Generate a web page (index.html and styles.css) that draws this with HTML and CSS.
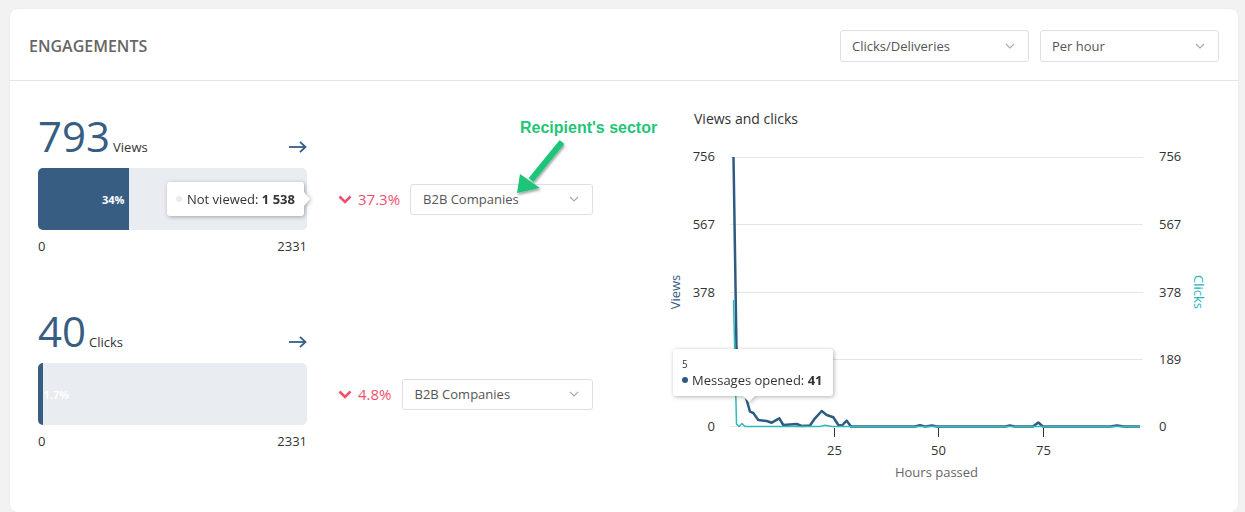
FILE: index.html
```html
<!DOCTYPE html>
<html lang="en">
<head>
<meta charset="utf-8">
<title>Engagements</title>
<link rel="stylesheet" href="styles.css">
</head>
<body>
<div class="card">
  <div class="card-header">
    <h2 class="title">ENGAGEMENTS</h2>
    <div class="header-controls">
      <div class="select select-metric"><span>Clicks/Deliveries</span><svg class="chev" width="10" height="6" viewBox="0 0 10 6"><polyline points="1,1 5,5 9,1"/></svg></div>
      <div class="select select-period"><span>Per hour</span><svg class="chev" width="10" height="6" viewBox="0 0 10 6"><polyline points="1,1 5,5 9,1"/></svg></div>
    </div>
  </div>

  <div class="card-body">
    <div class="metrics">
      <div class="metric">
        <div class="metric-head">
          <div class="metric-value"><span class="num">793</span><span class="unit">Views</span></div>
          <svg class="go" width="18" height="12" viewBox="0 0 18 12"><line x1="0" y1="6" x2="16.5" y2="6"/><polyline points="11,0.8 16.5,6 11,11.2"/></svg>
        </div>
        <div class="bar-row">
          <div class="bar">
            <div class="bar-fill" style="width:34%"><span class="bar-pct">34%</span></div>
            <div class="tip tip-bar"><span class="dot dot-light"></span>Not viewed:&nbsp;<b>1 538</b></div>
          </div>
          <div class="change">
            <div class="delta"><svg width="14" height="9" viewBox="0 0 14 9"><polyline points="1.5,1.5 7,7 12.5,1.5"/></svg>37.3%</div>
            <div class="select select-sector"><span>B2B Companies</span><svg class="chev" width="10" height="6" viewBox="0 0 10 6"><polyline points="1,1 5,5 9,1"/></svg></div>
          </div>
        </div>
        <div class="bar-scale"><span>0</span><span>2331</span></div>
      </div>

      <div class="metric">
        <div class="metric-head">
          <div class="metric-value"><span class="num">40</span><span class="unit">Clicks</span></div>
          <svg class="go" width="18" height="12" viewBox="0 0 18 12"><line x1="0" y1="6" x2="16.5" y2="6"/><polyline points="11,0.8 16.5,6 11,11.2"/></svg>
        </div>
        <div class="bar-row">
          <div class="bar">
            <div class="bar-fill" style="width:1.7%"></div>
            <span class="bar-pct bar-pct-out">1.7%</span>
          </div>
          <div class="change">
            <div class="delta"><svg width="14" height="9" viewBox="0 0 14 9"><polyline points="1.5,1.5 7,7 12.5,1.5"/></svg>4.8%</div>
            <div class="select select-sector"><span>B2B Companies</span><svg class="chev" width="10" height="6" viewBox="0 0 10 6"><polyline points="1,1 5,5 9,1"/></svg></div>
          </div>
        </div>
        <div class="bar-scale"><span>0</span><span>2331</span></div>
      </div>
    </div>

    <div class="chart-col">
      <div class="chart-title">Views and clicks</div>
      <div class="chart-wrap">
        <svg class="chart-svg" width="578" height="360" viewBox="0 0 578 360">
          <g class="grid">
            <line x1="70" y1="28.5" x2="483" y2="28.5"/>
            <line x1="70" y1="95.5" x2="483" y2="95.5"/>
            <line x1="70" y1="163.5" x2="483" y2="163.5"/>
            <line x1="70" y1="230.5" x2="483" y2="230.5"/>
            <line x1="70" y1="297.5" x2="483" y2="297.5"/>
          </g>
          <g class="ylab-left">
            <text x="55" y="32">756</text>
            <text x="55" y="100">567</text>
            <text x="55" y="168">378</text>
            <text x="55" y="235">189</text>
            <text x="55" y="302">0</text>
          </g>
          <g class="ylab-right">
            <text x="499" y="32">756</text>
            <text x="499" y="100">567</text>
            <text x="499" y="168">378</text>
            <text x="499" y="235">189</text>
            <text x="499" y="302">0</text>
          </g>
          <text class="axis-title-views" transform="translate(20 163) rotate(-90)">Views</text>
          <text class="axis-title-clicks" transform="translate(534 163) rotate(90)">Clicks</text>
          <g class="ticks">
            <line x1="174.5" y1="299" x2="174.5" y2="308"/>
            <line x1="278.5" y1="299" x2="278.5" y2="308"/>
            <line x1="383.5" y1="299" x2="383.5" y2="308"/>
          </g>
          <g class="xlab">
            <text x="174.5" y="326">25</text>
            <text x="278.5" y="326">50</text>
            <text x="383.5" y="326">75</text>
          </g>
          <text class="x-title" x="276.5" y="348">Hours passed</text>
          <path class="line-views" d="M73.5 28 L76.5 220 L80 246 L86.7 271 L90 282.7 L93.3 284 L98.3 291 L106.7 292 L111.7 293.7 L119.3 289.3 L123.3 296 L136.7 295 L141.7 297 L150 296.5 L155 289.3 L161.7 282 L166.7 286 L173.3 288.3 L178.3 296 L182 296.5 L186.7 291.7 L191 297.5 L255 297.5 L260 296.3 L265 297.5 L272 296.5 L277 297.5 L345 297.5 L350 296.5 L355 297.5 L373 297.5 L378.3 293.5 L383 297.5 L450 297.5 L457 296.5 L464 297.5 L480 297.5"/>
          <path class="line-clicks" d="M73.5 171 L76.5 295 L79 297.5 L82 294.5 L85 297.5 L160 297.5 L165 296.2 L172 297.5 L480 297.5"/>
        </svg>
        <div class="tip tip-chart">
          <div class="tip-x">5</div>
          <div class="tip-line"><span class="dot dot-dark"></span>Messages opened:&nbsp;<b>41</b></div>
        </div>
      </div>
    </div>

    <div class="note">Recipient's sector</div>
    <svg class="note-arrow" width="70" height="66" viewBox="0 0 70 66">
      <defs>
        <filter id="sh" x="-30%" y="-30%" width="160%" height="160%">
          <feDropShadow dx="1" dy="2" stdDeviation="1.2" flood-color="#000" flood-opacity="0.35"/>
        </filter>
      </defs>
      <g filter="url(#sh)">
        <line x1="57" y1="7" x2="26" y2="45" stroke="#1fc578" stroke-width="6"/>
        <polygon points="12,58 15,39 35,53" fill="#1fc578"/>
      </g>
    </svg>
  </div>
</div>
</body>
</html>
```

FILE: styles.css
```css
* { box-sizing: border-box; margin: 0; padding: 0; }
html, body { height: 100%; }
body {
  background: #f2f2f2;
  font-family: "Open Sans", "Liberation Sans", sans-serif;
  color: #333;
  padding: 9px 7px 0 10px;
  overflow: hidden;
}
.card {
  background: #fff;
  border-radius: 8px;
  height: 503px;
  box-shadow: 0 0 2px rgba(0, 0, 0, 0.07);
}
.card-header {
  height: 72px;
  border-bottom: 1px solid #e6e6e6;
  display: flex;
  align-items: center;
  justify-content: space-between;
  padding: 2px 19px 0 19px;
}
.title {
  font-size: 16px;
  font-weight: 600;
  color: #666;
  line-height: 22px;
}
.header-controls { display: flex; gap: 11px; }
.select {
  height: 32px;
  border: 1px solid #dcdfe6;
  border-radius: 3px;
  background: #fff;
  display: flex;
  align-items: center;
  justify-content: space-between;
  padding: 0 13px 0 11px;
  font-size: 13px;
  color: #555;
  white-space: nowrap;
}
.select-metric { width: 189px; }
.select-period { width: 179px; }
.chev polyline { fill: none; stroke: #aaa; stroke-width: 1.1; }

.card-body {
  position: relative;
  display: flex;
  padding: 34px 0 0 28px;
}
.metrics { width: 555px; }
.metric + .metric { margin-top: 55px; }
.metric-head {
  width: 269px;
  height: 42px;
  display: flex;
  justify-content: space-between;
  align-items: flex-end;
}
.metric-value { font-size: 42px; line-height: 42px; height: 42px; white-space: nowrap; }
.num { color: #375d83; }
.unit { font-size: 13px; margin-left: 3px; color: #333; }
.go { margin-bottom: 4px; }
.go line, .go polyline { fill: none; stroke: #375d83; stroke-width: 1.8; }

.bar-row { display: flex; align-items: center; margin-top: 11px; }
.bar {
  position: relative;
  width: 269px;
  height: 62px;
  background: #e9ecf1;
  border-radius: 5px;
  display: flex;
  align-items: center;
  flex: none;
}
.bar-fill {
  height: 100%;
  background: #375d83;
  border-radius: 5px 0 0 5px;
  display: flex;
  align-items: center;
  justify-content: flex-end;
}
.bar-pct {
  font-size: 11px;
  font-weight: 700;
  color: #fff;
  padding-right: 5px;
}
.bar-pct-out { margin-left: 1px; }
.bar-scale {
  width: 269px;
  display: flex;
  justify-content: space-between;
  font-size: 13px;
  line-height: 18px;
  margin-top: 7px;
}
.change {
  display: flex;
  align-items: center;
  margin-left: 31px;
  width: 255px;
}
.delta {
  display: flex;
  align-items: center;
  color: #f0506e;
  font-size: 15px;
  margin-right: 10px;
  white-space: nowrap;
}
.delta svg { margin-right: 6px; }
.delta polyline { fill: none; stroke: #f0506e; stroke-width: 2.6; }
.select-sector { flex: 1; height: 31px; padding-left: 12px; }

.tip {
  position: absolute;
  background: #fff;
  border-radius: 3px;
  filter: drop-shadow(1px 1px 2px rgba(0, 0, 0, 0.3));
  font-size: 13px;
  line-height: 18px;
  color: #333;
  white-space: nowrap;
}
.tip b { font-weight: 700; }
.tip-bar {
  left: 129px;
  top: 14px;
  height: 34px;
  padding: 8px 9px 8px 9px;
  display: flex;
  align-items: center;
}
.tip-bar::after {
  content: "";
  position: absolute;
  left: 100%;
  top: 50%;
  margin-top: -7px;
  border-left: 6px solid #fff;
  border-top: 7px solid transparent;
  border-bottom: 7px solid transparent;
}
.dot { width: 6px; height: 6px; border-radius: 50%; flex: none; }
.dot-light { background: #e9ecf1; margin-right: 5px; }
.dot-dark { background: #2f5b82; margin-right: 4px; }

.chart-col { width: 578px; margin-left: 67px; margin-top: -6px; }
.chart-title { font-size: 14px; line-height: 20px; color: #333; padding-left: 34px; }
.chart-wrap { position: relative; }
.chart-svg { display: block; }
.chart-svg text { font-family: "Open Sans", "Liberation Sans", sans-serif; font-size: 13px; fill: #333; }
.grid line { stroke: #e6e6e6; stroke-width: 1; }
.ylab-left text { text-anchor: end; }
.ylab-right text { text-anchor: start; }
.chart-svg .axis-title-views { fill: #34597e; text-anchor: middle; }
.chart-svg .axis-title-clicks { fill: #22b5b8; text-anchor: middle; }
.ticks line { stroke: #333; stroke-width: 1; }
.xlab text { text-anchor: middle; }
.chart-svg .x-title { fill: #666; text-anchor: middle; }
.line-views { fill: none; stroke: #2f5b82; stroke-width: 2.5; stroke-linejoin: round; }
.line-clicks { fill: none; stroke: #2fb9bb; stroke-width: 1.5; stroke-linejoin: round; }

.tip-chart {
  left: 13px;
  top: 220px;
  padding: 8px 10px 7px 9px;
}
.tip-chart::after {
  content: "";
  position: absolute;
  top: 100%;
  left: 70px;
  border-top: 6px solid #fff;
  border-left: 6px solid transparent;
  border-right: 6px solid transparent;
}
.tip-x { font-size: 10px; line-height: 14px; }
.tip-line { display: flex; align-items: center; }

.note {
  position: absolute;
  left: 510px;
  top: 37px;
  font-family: "Liberation Sans", Arial, sans-serif;
  font-weight: 700;
  font-size: 16px;
  line-height: 20px;
  color: #1fc578;
  white-space: nowrap;
}
.note-arrow { position: absolute; left: 495px; top: 54px; }
```
